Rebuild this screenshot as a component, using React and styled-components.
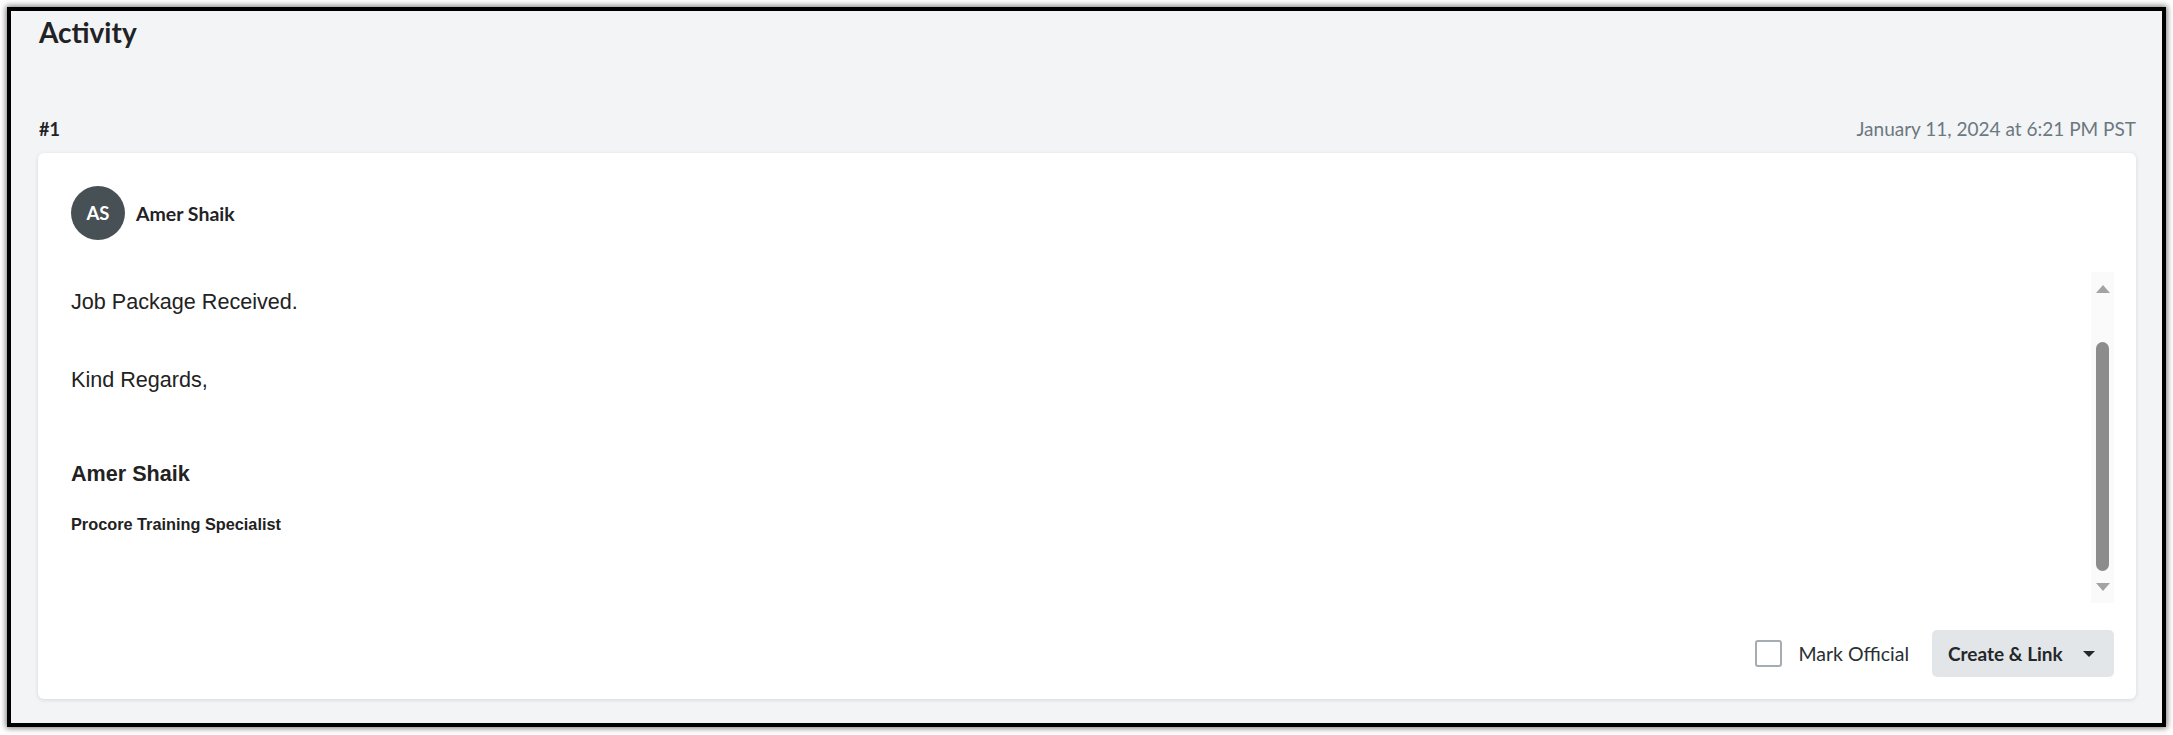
import React from 'react';
import styled, { createGlobalStyle } from 'styled-components';

const GlobalStyle = createGlobalStyle`
  body {
    margin: 0;
    background: #ffffff;
  }
`;

const Page = styled.div`
  padding: 7px;
`;

const Frame = styled.div`
  border: 4px solid #000;
  box-shadow: 0 0 6px 1px rgba(0, 0, 0, 0.55);
  background: #f3f4f6;
  padding: 4px 26px 24px 27px;
  font-family: Lato, "Liberation Sans", sans-serif;
  color: #1f2326;
`;

const Title = styled.h1`
  margin: 0 0 69px 1px;
  font-size: 28px;
  line-height: 34px;
  font-weight: 700;
  color: #1f2326;
`;

const EntryHead = styled.div`
  display: flex;
  justify-content: space-between;
  align-items: baseline;
  height: 22px;
  line-height: 22px;
  margin-bottom: 13px;
`;

const EntryNumber = styled.span`
  font-size: 18px;
  font-weight: 700;
  padding-left: 1px;
`;

const Timestamp = styled.span`
  font-size: 19px;
  color: #6b7880;
`;

const Card = styled.div`
  background: #fff;
  border-radius: 6px;
  box-shadow: 0 1px 4px rgba(0, 0, 0, 0.12);
  padding: 33px 22px 22px 33px;
`;

const Author = styled.div`
  display: flex;
  align-items: center;
  gap: 11px;
`;

const Avatar = styled.div`
  width: 54px;
  height: 54px;
  border-radius: 50%;
  background: #475055;
  color: #fff;
  display: flex;
  align-items: center;
  justify-content: center;
  font-size: 18.5px;
  font-weight: 700;
`;

const AuthorName = styled.span`
  font-size: 19.5px;
  font-weight: 700;
`;

const Message = styled.div`
  display: flex;
  height: 331px;
  margin-top: 32px;
`;

const MessageBody = styled.div`
  flex: 1;
  padding-top: 17.5px;
  font-family: "Liberation Sans", Arial, sans-serif;
  color: #222;
`;

const Line = styled.div`
  font-size: ${(p) => p.$size || 21.6}px;
  font-weight: ${(p) => (p.$bold ? 700 : 400)};
  line-height: ${(p) => p.$lh || 24}px;
  margin-top: ${(p) => p.$gap || 0}px;
`;

const Scrollbar = styled.div`
  width: 23px;
  background: #fafafa;
  display: flex;
  flex-direction: column;
  align-items: center;
`;

const Arrow = styled.div`
  width: 0;
  height: 0;
  border-left: 7.5px solid transparent;
  border-right: 7.5px solid transparent;
  ${(p) =>
    p.$down
      ? 'border-top: 8px solid #a3a3a3; margin: 12px 0 12px;'
      : 'border-bottom: 8px solid #a3a3a3; margin-top: 13px;'}
`;

const ThumbZone = styled.div`
  flex: 1;
  display: flex;
  flex-direction: column;
  align-items: center;
  padding-top: 49px;
`;

const Thumb = styled.div`
  width: 13px;
  height: 229px;
  border-radius: 7px;
  background: #8c8c8c;
`;

const Footer = styled.div`
  display: flex;
  justify-content: flex-end;
  align-items: center;
  margin-top: 27px;
`;

const CheckLabel = styled.label`
  display: flex;
  align-items: center;
  gap: 16px;
  font-size: 19.5px;
  color: #2a2f33;
`;

const Box = styled.span`
  width: 27px;
  height: 27px;
  box-sizing: border-box;
  border: 2px solid #a4adb2;
  border-radius: 3px;
  background: #fff;
`;

const SplitButton = styled.button`
  margin-left: 23px;
  height: 47px;
  width: 182px;
  display: flex;
  align-items: center;
  gap: 20px;
  padding: 0 17px 0 16px;
  border: none;
  border-radius: 5px;
  background: #e3e6e8;
  font-family: Lato, "Liberation Sans", sans-serif;
  font-size: 19px;
  font-weight: 700;
  color: #232729;
  white-space: nowrap;
`;

const Caret = styled.span`
  width: 0;
  height: 0;
  border-left: 6.5px solid transparent;
  border-right: 6.5px solid transparent;
  border-top: 6px solid #232729;
`;

export default function App() {
  return (
    <>
      <GlobalStyle />
      <Page>
        <Frame>
          <Title>Activity</Title>
          <EntryHead>
            <EntryNumber>#1</EntryNumber>
            <Timestamp>January 11, 2024 at 6:21 PM PST</Timestamp>
          </EntryHead>
          <Card>
            <Author>
              <Avatar>AS</Avatar>
              <AuthorName>Amer Shaik</AuthorName>
            </Author>
            <Message>
              <MessageBody>
                <Line>Job Package Received.</Line>
                <Line $gap={54.5}>Kind Regards,</Line>
                <Line $gap={70} $bold>Amer Shaik</Line>
                <Line $gap={29} $bold $size={16.3} $lh={18}>Procore Training Specialist</Line>
              </MessageBody>
              <Scrollbar>
                <Arrow />
                <ThumbZone>
                  <Thumb />
                </ThumbZone>
                <Arrow $down />
              </Scrollbar>
            </Message>
            <Footer>
              <CheckLabel>
                <Box />
                Mark Official
              </CheckLabel>
              <SplitButton>
                Create &amp; Link
                <Caret />
              </SplitButton>
            </Footer>
          </Card>
        </Frame>
      </Page>
    </>
  );
}
